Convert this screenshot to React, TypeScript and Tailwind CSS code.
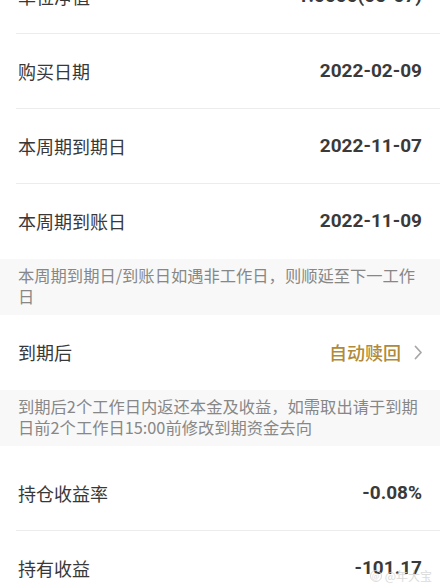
import React from "react";

const CJK = '"Noto Sans CJK SC", "Noto Sans", sans-serif';
const NUM = 'Roboto, "Noto Sans CJK SC", sans-serif';

function Row({ label, value, divider = true, extra = "" }: { label: string; value: React.ReactNode; divider?: boolean; extra?: string }) {
  return (
    <div className={`ml-[16px] h-[75px] flex items-center justify-between pr-[18px] ${divider ? "border-b border-[#ececec]" : ""} ${extra}`}>
      <span className="pl-[2px] text-[18px] text-[#383838]" style={{ fontFamily: CJK }}>{label}</span>
      <span className="text-[19px] font-bold text-[#3a3a3a]" style={{ fontFamily: NUM }}>{value}</span>
    </div>
  );
}

function Note({ children }: { children: React.ReactNode }) {
  return (
    <div className="bg-[#f8f8f8] px-[18px] pt-[6px] pb-[8px] text-[16.3px] leading-[21px] text-[#878787]" style={{ fontFamily: CJK }}>
      {children}
    </div>
  );
}

export default function App() {
  return (
    <div className="relative w-[440px] h-[587px] overflow-hidden bg-white">
      <div className="mt-[-41px]">
        <Row label="单位净值" value="1.0000(05-07)" />
        <Row label="购买日期" value="2022-02-09" />
        <Row label="本周期到期日" value="2022-11-07" />
        <Row label="本周期到账日" value="2022-11-09" divider={false} />
        <Note>本周期到期日/到账日如遇非工作日，则顺延至下一工作日</Note>
        <div className="ml-[16px] h-[75px] flex items-center justify-between pr-[17px]">
          <span className="pl-[2px] text-[18px] text-[#383838]" style={{ fontFamily: CJK }}>到期后</span>
          <span className="flex items-center gap-[13px]">
            <span className="text-[18px] font-medium text-[#b08a3a]" style={{ fontFamily: CJK }}>自动赎回</span>
            <svg width="9" height="15" viewBox="0 0 9 15" fill="none">
              <path d="M1.5 1.5 L7 7.5 L1.5 13.5" stroke="#a8a8a8" strokeWidth="1.8" strokeLinecap="round" strokeLinejoin="round" />
            </svg>
          </span>
        </div>
        <Note>到期后2个工作日内返还本金及收益，如需取出请于到期日前2个工作日15:00前修改到期资金去向</Note>
        <Row label="持仓收益率" value="-0.08%" extra="mt-[10px]" />
        <Row label="持有收益" value="-101.17" divider={false} />
      </div>
      <div className="absolute right-[8px] bottom-[2px] flex items-center gap-[3px] text-[12px] text-[#d4d4d4] opacity-80" style={{ fontFamily: CJK }}>
        <span className="inline-flex items-center justify-center w-[12px] h-[12px] rounded-full border border-[#d4d4d4] text-[8px] leading-none">@</span>
        <span>@年大宝</span>
      </div>
    </div>
  );
}
